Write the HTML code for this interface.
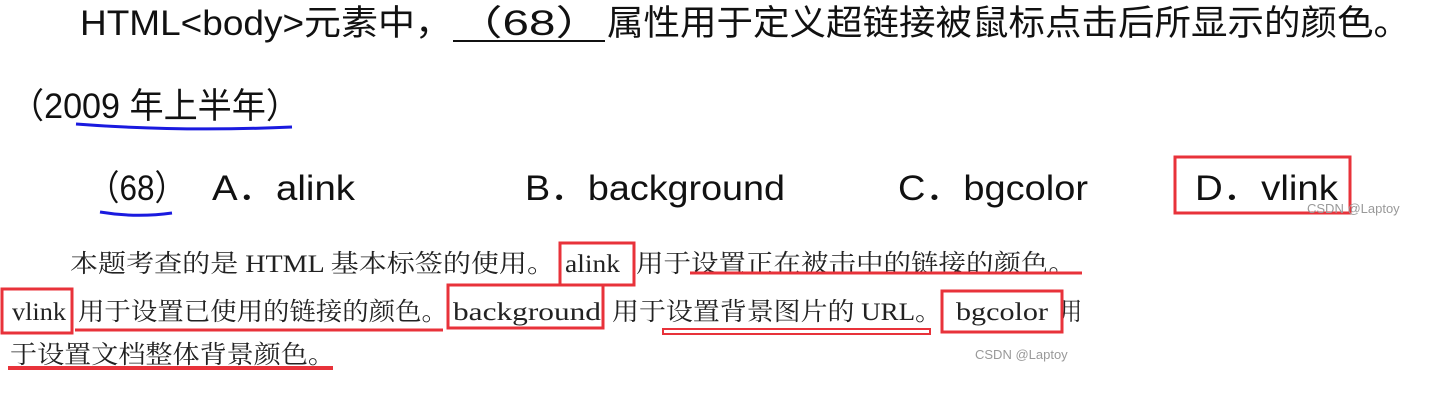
<!DOCTYPE html>
<html><head><meta charset="utf-8"><style>html,body{margin:0;padding:0;background:#fff;width:1451px;height:404px;overflow:hidden}</style></head>
<body>
<svg width="1451" height="404" xmlns="http://www.w3.org/2000/svg">
<g font-family="Liberation Sans, Noto Sans CJK SC, sans-serif" font-size="35" fill="#111">
<text x="80" y="35" textLength="372" lengthAdjust="spacingAndGlyphs">HTML&lt;body&gt;元素中，</text>
<text x="455" y="35" textLength="148" lengthAdjust="spacingAndGlyphs">（68）</text>
<text x="607" y="35" textLength="803" lengthAdjust="spacingAndGlyphs">属性用于定义超链接被鼠标点击后所显示的颜色。</text>
<text x="10" y="118" textLength="290" lengthAdjust="spacingAndGlyphs">（2009 年上半年）</text>
<text x="88" y="200" textLength="98" lengthAdjust="spacingAndGlyphs">（68）</text>
<text x="212" y="200" textLength="143" lengthAdjust="spacingAndGlyphs">A．alink</text>
<text x="525" y="200" textLength="260" lengthAdjust="spacingAndGlyphs">B．background</text>
<text x="898" y="200" textLength="190" lengthAdjust="spacingAndGlyphs">C．bgcolor</text>
<text x="1195" y="200" textLength="143" lengthAdjust="spacingAndGlyphs">D．vlink</text>
</g>
<line x1="453" y1="41" x2="605" y2="41" stroke="#111" stroke-width="2"/>
<path d="M76 124 Q180 132 292 127" stroke="#1a1adf" stroke-width="3" fill="none"/>
<path d="M100 212 Q136 218 172 213" stroke="#1a1adf" stroke-width="3" fill="none"/>
<rect x="1175" y="157" width="175" height="56" fill="none" stroke="#e8323a" stroke-width="3"/>
<g font-family="Liberation Sans, sans-serif" font-size="13" fill="#999">
<text x="1307" y="213">CSDN @Laptoy</text>
<text x="975" y="359">CSDN @Laptoy</text>
</g>
<g font-family="Liberation Serif, Noto Serif CJK SC, serif" font-size="25" fill="#222">
<text x="70" y="272" textLength="485" lengthAdjust="spacingAndGlyphs">本题考查的是 HTML 基本标签的使用。</text>
<text x="565" y="272" textLength="55" lengthAdjust="spacingAndGlyphs">alink</text>
<text x="636" y="272" textLength="440" lengthAdjust="spacingAndGlyphs">用于设置正在被击中的链接的颜色。</text>
<text x="12" y="320" textLength="54" lengthAdjust="spacingAndGlyphs">vlink</text>
<text x="78" y="320" textLength="370" lengthAdjust="spacingAndGlyphs">用于设置已使用的链接的颜色。</text>
<text x="453" y="320" textLength="148" lengthAdjust="spacingAndGlyphs">background</text>
<text x="612" y="320" textLength="330" lengthAdjust="spacingAndGlyphs">用于设置背景图片的 URL。</text>
<text x="956" y="320" textLength="92" lengthAdjust="spacingAndGlyphs">bgcolor</text>
<text x="1060" y="320" textLength="22" lengthAdjust="spacingAndGlyphs">用</text>
<text x="10" y="363" textLength="325" lengthAdjust="spacingAndGlyphs">于设置文档整体背景颜色。</text>
</g>
<g fill="none" stroke="#e8323a" stroke-width="3">
<rect x="560" y="243" width="74" height="42"/>
<rect x="2" y="289" width="70" height="44"/>
<rect x="448" y="285" width="155" height="43"/>
<rect x="942" y="291" width="120" height="41"/>
<line x1="690" y1="273" x2="1082" y2="273"/>
<line x1="75" y1="330" x2="443" y2="330"/>
<line x1="8" y1="368" x2="333" y2="368" stroke-width="4"/>
</g>
<rect x="663" y="329" width="267" height="5" fill="none" stroke="#e8323a" stroke-width="2"/>
</svg>
</body></html>
